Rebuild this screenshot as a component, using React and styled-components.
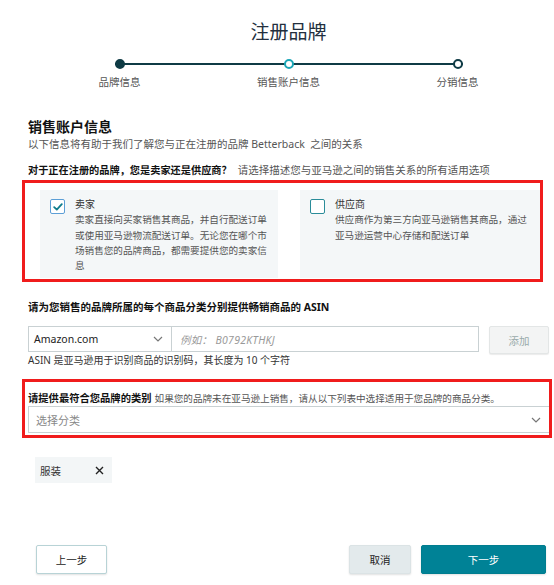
import * as React from 'react';
import styled, {createGlobalStyle} from 'styled-components';

const GlobalStyle = createGlobalStyle`
  body {
    margin: 0;
    background: #fff;
    font-family: "Noto Sans", "Noto Sans CJK SC", sans-serif;
    color: #333;
  }
`;

const Page = styled.div`
  width: 554px;
  height: 585px;
  box-sizing: border-box;
  padding: 20px 5px 0 28px;
  overflow: hidden;
`;

const Title = styled.h1`
  margin: 0;
  text-align: center;
  font-size: 19px;
  line-height: 24px;
  font-weight: 400;
  color: #232f3e;
`;

const Stepper = styled.div`
  width: 348px;
  margin: 15px auto 0;
`;

const Track = styled.div`
  display: flex;
  justify-content: space-between;
  align-items: center;
  height: 10px;
  background: linear-gradient(#0f3b45, #0f3b45) center / 100% 2px no-repeat;
`;

const Dot = styled.span`
  width: 10px;
  height: 10px;
  box-sizing: border-box;
  border-radius: 50%;
  border: 2px solid ${p => p.$color};
  background: ${p => p.$filled ? p.$color : '#fff'};
`;

const StepLabels = styled.div`
  display: flex;
  justify-content: space-between;
  margin: 6px -30px 0;
`;

const StepLabel = styled.span`
  width: 70px;
  text-align: center;
  font-size: 10.5px;
  line-height: 14px;
  color: #555;
`;

const Heading = styled.h2`
  margin: 29px 0 0;
  font-size: 14px;
  line-height: 18px;
  font-weight: 700;
  color: #111;
`;

const Sub = styled.p`
  margin: 1px 0 0;
  font-size: 10.5px;
  line-height: 14px;
  color: #555;
`;

const Question = styled.p`
  margin: 12px 0 0;
  font-size: 10.5px;
  line-height: 14px;
  color: #555;
`;

const Strong = styled.b`
  font-weight: 700;
  font-size: ${p => p.$size || 'inherit'};
  color: #111;
  margin-right: ${p => p.$gap || 0}px;
`;

const Highlight = styled.div`
  border: 3px solid #f01c1c;
  margin: ${p => p.$margin};
  padding: ${p => p.$padding};
`;

const Cards = styled.div`
  display: grid;
  grid-template-columns: 238px 240px;
  gap: 22px;
`;

const Card = styled.div`
  background: #f4f7f8;
  display: flex;
  gap: 10px;
  padding: 9px 0 4px 10px;
  min-height: 75px;
`;

const Check = styled.span`
  flex-shrink: 0;
  width: 15px;
  height: 15px;
  box-sizing: border-box;
  border-radius: 2px;
  background: #fff;
  border: 1.5px solid ${p => p.$checked ? '#5c9fd6' : '#2a8c99'};
  display: flex;
  align-items: center;
  justify-content: center;
`;

const CardText = styled.div`
  width: 196px;
  font-size: 9.6px;
  line-height: 15.3px;
  color: #555;
  margin-top: -2px;
`;

const CardTitle = styled.div`
  color: #333;
  font-size: 10px;
`;

const Label = styled.div`
  font-size: 10.5px;
  line-height: 14px;
  font-weight: 700;
  color: #111;
  margin-top: 18px;
`;

const Row = styled.div`
  display: flex;
  align-items: stretch;
  margin-top: 12px;
  height: 26px;
`;

const Field = styled.div`
  box-sizing: border-box;
  border: 1px solid #c9d1d3;
  background: #fff;
  display: flex;
  align-items: center;
  justify-content: space-between;
  padding: 0 8px 0 5px;
  width: ${p => p.$w}px;
  flex: ${p => p.$grow ? 1 : 'none'};
  font-size: 10.5px;
  color: ${p => p.$muted ? '#999' : '#222'};
  font-style: ${p => p.$italic ? 'italic' : 'normal'};
  & + & {
    border-left: none;
  }
`;

const Input = styled(Field)`
  width: 307px;
  padding-left: 8px;
  letter-spacing: .3px;
`;

const AddButton = styled.button`
  margin-left: 10px;
  width: 61px;
  height: 28px;
  border: 1px solid #e3e6e6;
  border-radius: 2px;
  background: #f3f4f4;
  box-shadow: 0 1px 1px rgba(0,0,0,.08);
  color: #9aa;
  font: inherit;
  font-size: 10.5px;
`;

const Help = styled.div`
  font-size: 10px;
  line-height: 12px;
  margin-top: 2px;
  color: #333;
`;

const LabelInline = styled.div`
  font-size: 9.6px;
  line-height: 14px;
  color: #555;
  margin-top: 5px;
`;

const CatSelect = styled(Field)`
  height: 27px;
  padding: 0 8px 0 7px;
  font-size: 11px;
  color: #888;
  border-right: none;
`;

const Tag = styled.div`
  display: inline-flex;
  align-items: center;
  justify-content: space-between;
  width: 77px;
  height: 26px;
  box-sizing: border-box;
  margin: 19px 0 0 7px;
  padding: 0 8px 0 5px;
  background: #f3f6f7;
  font-size: 10.5px;
  color: #333;
`;

const Footer = styled.div`
  display: flex;
  align-items: center;
  margin-top: 62px;
  padding-left: 8px;
  padding-right: 3px;
  gap: 10px;
`;

const Button = styled.button`
  height: 29px;
  width: ${p => p.$w}px;
  box-sizing: border-box;
  border-radius: 2px;
  font: inherit;
  font-size: 10.5px;
  border: 1px solid ${p => p.$variant === 'primary' ? '#007d8f' : p.$variant === 'ghost' ? '#b8d3d6' : '#dbe3e5'};
  background: ${p => p.$variant === 'primary' ? '#008296' : p.$variant === 'ghost' ? '#fff' : '#e3eaec'};
  color: ${p => p.$variant === 'primary' ? '#fff' : '#222'};
  box-shadow: 0 1px 2px rgba(0,0,0,.12);
  margin-left: ${p => p.$push ? 'auto' : 0};
`;

const Chevron = () => (
  <svg width="10" height="6" viewBox="0 0 10 6">
    <polyline points="1,1 5,5 9,1" fill="none" stroke="#777" strokeWidth="1.2" />
  </svg>
);

const Tick = () => (
  <svg width="10" height="8" viewBox="0 0 10 8">
    <polyline points="1.2,4.2 3.8,6.6 8.8,1.2" fill="none" stroke="#0f7c8c" strokeWidth="1.8" strokeLinecap="round" strokeLinejoin="round" />
  </svg>
);

const Close = () => (
  <svg width="9" height="9" viewBox="0 0 9 9">
    <path d="M1 1 L8 8 M8 1 L1 8" stroke="#222" strokeWidth="1.4" />
  </svg>
);

const steps = [
  {label: '品牌信息', color: '#0f3b45', filled: true},
  {label: '销售账户信息', color: '#1aa6b7', filled: false},
  {label: '分销信息', color: '#0f3b45', filled: false},
];

export default function App() {
  return (
    <>
      <GlobalStyle />
      <Page>
        <Title>注册品牌</Title>
        <Stepper>
          <Track>
            {steps.map(s => <Dot key={s.label} $color={s.color} $filled={s.filled} />)}
          </Track>
          <StepLabels>
            {steps.map(s => <StepLabel key={s.label}>{s.label}</StepLabel>)}
          </StepLabels>
        </Stepper>

        <Heading>销售账户信息</Heading>
        <Sub>以下信息将有助于我们了解您与正在注册的品牌 Betterback&nbsp; 之间的关系</Sub>
        <Question>
          <Strong $gap={6} $size="10.2px">对于正在注册的品牌，您是卖家还是供应商？</Strong>
          请选择描述您与亚马逊之间的销售关系的所有适用选项
        </Question>

        <Highlight $margin="3px 6px 0 -6px" $padding="7px 0 1px 15px">
          <Cards>
            <Card>
              <Check $checked><Tick /></Check>
              <CardText>
                <CardTitle>卖家</CardTitle>
                卖家直接向买家销售其商品，并自行配送订单或使用亚马逊物流配送订单。无论您在哪个市场销售您的品牌商品，都需要提供您的卖家信息
              </CardText>
            </Card>
            <Card>
              <Check />
              <CardText>
                <CardTitle>供应商</CardTitle>
                供应商作为第三方向亚马逊销售其商品，通过亚马逊运营中心存储和配送订单
              </CardText>
            </Card>
          </Cards>
        </Highlight>

        <Label>请为您销售的品牌所属的每个商品分类分别提供畅销商品的 ASIN</Label>
        <Row>
          <Field $w={144}>Amazon.com<Chevron /></Field>
          <Input $muted $italic>例如：&nbsp;B0792KTHKJ</Input>
          <AddButton>添加</AddButton>
        </Row>
        <Help>ASIN 是亚马逊用于识别商品的识别码，其长度为 10 个字符</Help>

        <Highlight $margin="13px -3px 0 -6px" $padding="4px 0 2px 3px">
          <LabelInline>
            <Strong $gap={3} $size="10.3px">请提供最符合您品牌的类别</Strong>
            如果您的品牌未在亚马逊上销售，请从以下列表中选择适用于您品牌的商品分类。
          </LabelInline>
          <CatSelect $grow>选择分类<Chevron /></CatSelect>
        </Highlight>

        <Tag>服装<Close /></Tag>

        <Footer>
          <Button $variant="ghost" $w={71}>上一步</Button>
          <Button $variant="secondary" $w={62} $push>取消</Button>
          <Button $variant="primary" $w={125}>下一步</Button>
        </Footer>
      </Page>
    </>
  );
}
